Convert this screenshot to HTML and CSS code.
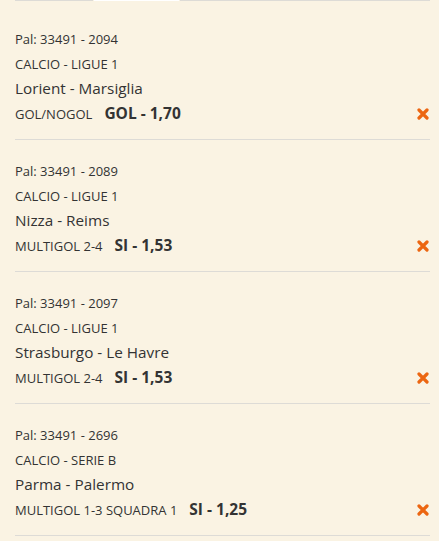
FILE: index.html
```html
<!DOCTYPE html>
<html lang="it">
<head>
<meta charset="utf-8">
<title>Scommesse</title>
<link rel="stylesheet" href="styles.css">
</head>
<body>
<div class="panel">
  <div class="tabline">
    <span class="seg seg-a"></span>
    <span class="seg seg-active"></span>
    <span class="seg seg-b"></span>
  </div>
  <ul class="bets">
    <li class="bet">
      <div class="pal">Pal: 33491 - 2094</div>
      <div class="league">CALCIO - LIGUE 1</div>
      <div class="match">Lorient - Marsiglia</div>
      <div class="pick">
        <span class="market">GOL/NOGOL</span>
        <span class="odd">GOL - 1,70</span>
        <button class="remove" aria-label="Rimuovi"><svg viewBox="0 0 12 12" width="12" height="12"><path d="M2 2 L10 10 M10 2 L2 10" /></svg></button>
      </div>
    </li>
    <li class="bet">
      <div class="pal">Pal: 33491 - 2089</div>
      <div class="league">CALCIO - LIGUE 1</div>
      <div class="match">Nizza - Reims</div>
      <div class="pick">
        <span class="market">MULTIGOL 2-4</span>
        <span class="odd">SI - 1,53</span>
        <button class="remove" aria-label="Rimuovi"><svg viewBox="0 0 12 12" width="12" height="12"><path d="M2 2 L10 10 M10 2 L2 10" /></svg></button>
      </div>
    </li>
    <li class="bet">
      <div class="pal">Pal: 33491 - 2097</div>
      <div class="league">CALCIO - LIGUE 1</div>
      <div class="match">Strasburgo - Le Havre</div>
      <div class="pick">
        <span class="market">MULTIGOL 2-4</span>
        <span class="odd">SI - 1,53</span>
        <button class="remove" aria-label="Rimuovi"><svg viewBox="0 0 12 12" width="12" height="12"><path d="M2 2 L10 10 M10 2 L2 10" /></svg></button>
      </div>
    </li>
    <li class="bet">
      <div class="pal">Pal: 33491 - 2696</div>
      <div class="league">CALCIO - SERIE B</div>
      <div class="match">Parma - Palermo</div>
      <div class="pick">
        <span class="market">MULTIGOL 1-3 SQUADRA 1</span>
        <span class="odd">SI - 1,25</span>
        <button class="remove" aria-label="Rimuovi"><svg viewBox="0 0 12 12" width="12" height="12"><path d="M2 2 L10 10 M10 2 L2 10" /></svg></button>
      </div>
    </li>
  </ul>
</div>
</body>
</html>
```

FILE: styles.css
```css
html, body {
  margin: 0;
  padding: 0;
  background: #faf3e3;
}
body {
  font-family: "Open Sans", "Liberation Sans", sans-serif;
  color: #333333;
}
.panel {
  padding: 0 9px 0 15px;
}
.tabline {
  display: flex;
  height: 1px;
  gap: 1px;
}
.seg {
  display: block;
  height: 1px;
}
.seg-a {
  width: 78px;
  background: #dddbd6;
}
.seg-active {
  width: 85px;
  background: #ffffff;
}
.seg-b {
  flex: 1;
  background: #dddbd6;
}
.bets {
  list-style: none;
  margin: 0;
  padding: 7px 0 0;
}
.bet {
  padding: 19px 0 12px;
  border-bottom: 1px solid #dddbd6;
}
.pal {
  font-size: 13px;
  line-height: 25px;
}
.league {
  font-size: 13px;
  line-height: 25px;
}
.match {
  font-size: 15.3px;
  line-height: 24px;
  margin-top: -1px;
  margin-bottom: 1px;
}
.pick {
  display: flex;
  align-items: baseline;
  height: 26px;
  line-height: 24px;
}
.market {
  font-size: 13px;
}
.odd {
  font-size: 15.5px;
  font-weight: 700;
  margin-left: 12px;
}
.remove {
  margin-left: auto;
  align-self: center;
  border: 0;
  padding: 0;
  background: none;
  width: 12px;
  height: 12px;
  display: flex;
  margin-right: 1px;
}
.remove svg path {
  stroke: #ec6611;
  stroke-width: 3.2;
  stroke-linecap: round;
  fill: none;
}
```
